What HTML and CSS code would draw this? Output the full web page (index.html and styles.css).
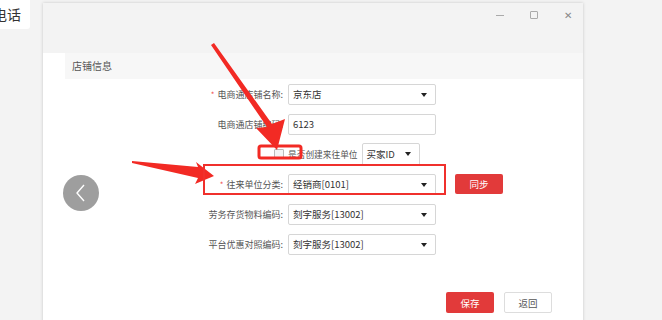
FILE: index.html
```html
<!DOCTYPE html>
<html lang="zh">
<head>
<meta charset="UTF-8" />
<title>店铺信息</title>
<link rel="stylesheet" href="styles.css">
</head>
<body>
<div class="phone-card">电话</div>

<div class="dialog">
  <div class="titlebar">
    <span class="win-btn min"></span>
    <span class="win-btn max"></span>
    <span class="win-btn close">&#x2715;</span>
  </div>
  <div class="dialog-body">
    <div class="section-title">店铺信息</div>
    <div class="form">
      <div class="row">
        <label class="lbl"><i>*</i> 电商通店铺名称:</label>
        <div class="select">京东店</div>
      </div>
      <div class="row">
        <label class="lbl">电商通店铺编码:</label>
        <div class="input">6123</div>
      </div>
      <div class="row">
        <label class="lbl"><span class="check"></span></label>
        <span class="check-text">是否创建来往单位</span>
        <div class="select small">买家ID</div>
      </div>
      <div class="row">
        <label class="lbl"><i>*</i> 往来单位分类:</label>
        <div class="select">经销商[0101]</div>
        <button class="btn red sync">同步</button>
      </div>
      <div class="row">
        <label class="lbl">劳务存货物料编码:</label>
        <div class="select">刻字服务[13002]</div>
      </div>
      <div class="row">
        <label class="lbl">平台优惠对照编码:</label>
        <div class="select">刻字服务[13002]</div>
      </div>
    </div>
    <div class="footer">
      <button class="btn red">保存</button>
      <button class="btn plain">返回</button>
    </div>
    <div class="prev-btn">
      <svg width="14" height="18" viewBox="0 0 14 18"><path d="M10 1 L3 9 L10 17" fill="none" stroke="#fff" stroke-width="1.4"/></svg>
    </div>
  </div>
</div>

<svg class="marks" width="662" height="320" viewBox="0 0 662 320">
  <polygon points="211,45 214,43 272,124 285,119 277,150 256,128 267,127" fill="#f22a24"/>
  <rect x="259" y="146" width="42" height="12" rx="2" fill="none" stroke="#f22a24" stroke-width="3"/>
  <polygon points="132,161 198,167 196,162 214,176 195,184 198,178 132,163" fill="#f22a24"/>
  <rect x="204" y="165" width="241" height="29" fill="none" stroke="#f0302c" stroke-width="2"/>
</svg>
</body>
</html>
```

FILE: styles.css
```css
body {
  margin: 0;
  width: 662px;
  height: 320px;
  overflow: hidden;
  background: #f3f3f3;
  font-family: "Noto Sans CJK SC", "Noto Sans", sans-serif;
  color: #333;
  position: relative;
}

.phone-card {
  width: 30px;
  height: 29px;
  background: #fff;
  border-radius: 0 0 3px 0;
  font-size: 14px;
  line-height: 28px;
  text-indent: -7px;
  overflow: hidden;
  white-space: nowrap;
  color: #333;
}

.dialog {
  position: absolute;
  left: 43px;
  top: 3px;
  width: 540px;
  height: 330px;
  background: #fff;
  box-shadow: 0 0 3px rgba(0, 0, 0, 0.18);
  display: flex;
  flex-direction: column;
}

.titlebar {
  height: 50px;
  background: #f3f3f3;
  display: flex;
  justify-content: flex-end;
  align-items: flex-start;
  padding: 8px 11px 0 0;
  box-sizing: border-box;
  gap: 26px;
}

.win-btn {
  width: 8px;
  height: 8px;
  color: #999;
  font-size: 9px;
  line-height: 8px;
  text-align: center;
}

.win-btn.min {
  height: 1px;
  margin-top: 4px;
  background: #aaa;
}

.win-btn.max {
  border: 1.5px solid #aaa;
  width: 6px;
  height: 6px;
  border-radius: 1px;
}

.win-btn.close {
  font-size: 10px;
  color: #888;
}

.dialog-body {
  position: relative;
  flex: 1;
  padding-left: 22px;
}

.section-title {
  height: 26px;
  background: #f7f7f7;
  font-size: 10px;
  line-height: 26px;
  padding-left: 7px;
  color: #555;
}

.form {
  display: flex;
  flex-direction: column;
  gap: 8px;
  margin-top: 4px;
}

.row {
  display: flex;
  align-items: center;
  height: 22px;
}

.lbl {
  width: 223px;
  padding-right: 5px;
  box-sizing: border-box;
  text-align: right;
  font-size: 9px;
  color: #555;
  display: flex;
  justify-content: flex-end;
  align-items: center;
}

.lbl i {
  font-style: normal;
  color: #f05050;
  margin-right: 3px;
  font-size: 8px;
}

.select, .input {
  position: relative;
  width: 148px;
  height: 21px;
  border: 1px solid #d6d6d6;
  border-radius: 2px;
  box-sizing: border-box;
  font-size: 9.5px;
  line-height: 19px;
  padding-left: 4px;
  color: #333;
}

.select::after {
  content: "";
  position: absolute;
  right: 8px;
  top: 8px;
  border-left: 3px solid transparent;
  border-right: 3px solid transparent;
  border-top: 4px solid #222;
}

.select.small {
  width: 58px;
  height: 23px;
  line-height: 21px;
  margin-left: 4px;
}

.check {
  width: 8px;
  height: 8px;
  border: 1px solid #bbb;
  border-radius: 1px;
  background: #f4f4f4;
  margin-right: -1px;
}

.check-text {
  font-size: 8.7px;
  color: #555;
}

.btn {
  width: 48px;
  height: 21px;
  border-radius: 2px;
  font-family: inherit;
  font-size: 9.5px;
  padding: 0;
  cursor: pointer;
}

.btn.red {
  background: #e23a3a;
  border: none;
  color: #fff;
}

.btn.plain {
  background: #fff;
  border: 1px solid #ddd;
  color: #555;
}

.sync {
  margin-left: 19px;
  height: 20px;
}

.footer {
  display: flex;
  justify-content: flex-end;
  gap: 10px;
  padding-right: 31px;
  margin-top: 37px;
}

.prev-btn {
  position: absolute;
  left: 20px;
  top: 122px;
  width: 36px;
  height: 36px;
  border-radius: 50%;
  background: #9e9e9e;
  display: flex;
  align-items: center;
  justify-content: center;
}

.marks {
  position: absolute;
  left: 0;
  top: 0;
  pointer-events: none;
}
```
